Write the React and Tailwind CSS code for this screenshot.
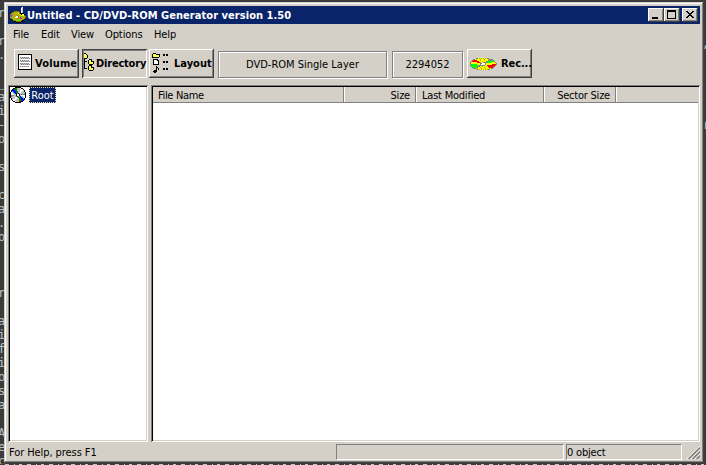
import React from "react";

const PALETTE = {
  k: "#000000", w: "#ffffff", g: "#808080", s: "#c0c0c0", y: "#ffff00",
  o: "#b8b000", r: "#ff0000", l: "#00ff00", G: "#008000", b: "#0000ff",
  c: "#00d0d0", m: "#ff00ff", p: "#800080", f: "#ffff90", d: "#808000",
};

// Bitmap icon: each character is one pixel, "." is transparent.
function Pixels({ rows, className = "" }) {
  const w = Math.max(...rows.map((r) => r.length));
  return (
    <svg width={w} height={rows.length} viewBox={`0 0 ${w} ${rows.length}`} shapeRendering="crispEdges" className={`block shrink-0 ${className}`}>
      {rows.flatMap((row, y) =>
        [...row].map((ch, x) =>
          PALETTE[ch] ? <rect key={`${x}-${y}`} x={x} y={y} width="1" height="1" fill={PALETTE[ch]} /> : null
        )
      )}
    </svg>
  );
}

const APP = [
  "...........gw...",
  "...........ws...",
  "...........ws...",
  "...........ws...",
  "....ddddd..ws...",
  "..ddoooood.ws...",
  ".dooooooydkkkk..",
  "doocooooooykywk.",
  "dmmoooodoooyyyd.",
  "dmoooowwdooloood",
  "oocoowwwdomloood",
  ".dooooodoommoook",
  ".kdoloooloooodk.",
  "..kddooollodkk..",
  "....kkdddddkk...",
  "......kkkkk.....",
];
const DISC = [
  ".....kkkkkk.....",
  "...kkGGssswkk...",
  "..kbGGGsssswwk..",
  ".kbbbGGssswwwsk.",
  ".kcbbbGGsswwssk.",
  "kwscbbGGswwssssk",
  "kwwscbbgkgssssgk",
  "kwwwsskwwksggggk",
  "kgggsskwwkswwwwk",
  "kgssssgkgcbsswwk",
  "ksssswwsGGbbcswk",
  ".kssswwssGGbbck.",
  ".kswwwsssGGbbbk.",
  "..kwwssssGGGbk..",
  "...kkwsssrpkk...",
  ".....kkkkkk.....",
];
const PAGE = [
  "kkkkkkkkkkkkkk",
  "kwwwwwwwwwwwwk",
  "kwwwwwwwwwwwwk",
  "kwgsgsgsgsgwwk",
  "kwsgsgsgsgsgwk",
  "kwwwwwwwwwwwwk",
  "kwgsgsgsgsgwwk",
  "kwsgsgsgsgsgwk",
  "kwwwwwwwwwwwwk",
  "kwgsgsgsgsgwwk",
  "kwsgsgsgsgsgwk",
  "kwwwwwwwwwwwwk",
  "kwgsgsgsgsgwwk",
  "kwwwwwwwwwwwwk",
  "kwwwwwwwwwwwwk",
  "kkkkkkkkkkkkkk",
];
const TREE = [
  "kk..........",
  "yfk.........",
  "fyfk........",
  "yfyk........",
  "fyfk........",
  "kkk.........",
  "k....kkk....",
  "k...kyfk....",
  "kkk.kfykkk..",
  "k...kyfyfk..",
  "k...kfyfyk..",
  "k....kkkk...",
  "k....kkk....",
  "k...kyfk....",
  "k...kfykkk..",
  "kkk.kyfyfk..",
  "....kfyfyk..",
  ".....kkkk...",
];
const LAYOUT = [
  ".kkk.............",
  "kyfykkkk...kk.kk.",
  "kfyfyfyk...kk.kk.",
  "kyfyfyfk.........",
  "kkkkkkk..........",
  ".................",
  ".kkkkk...........",
  ".kwwwkk..........",
  ".kwwwwk....kk.kk.",
  ".kwwwwk....kk.kk.",
  ".kwwwwk..........",
  ".kkkkkk..........",
  ".................",
  "....k............",
  "....kk...........",
  "....k.k....kk.kk.",
  "....k.k....kk.kk.",
  "..kkk............",
  ".kkkk............",
  "..kk.............",
];
const RECORD = [
  "......ggyoyoyoyoygg........",
  "...ggyoyyyoyyyoyyyogggg....",
  "..grrrryyyoyyyoyyygggglg...",
  ".grrrrrrryyyoyyyggllllllg..",
  "gyyyyyyrrrgyyggggllllyyyyg.",
  "gyyyyyyyyyggwwwgyyyyyyyyyyg",
  "gllllllyyygwwwwgyyyyyyrrrrg",
  "glllllllgggggggyyrrrrrrrrg.",
  ".gllllllggyyoyyyoyrrrrrrg..",
  "..glllggyyoyyyoyyyorrrrg...",
  "...gggyoyyyoyyyoyyyoygg....",
  "......ggyoyoyoyoyogg.......",
];
const MIN = ["......", "......", "......", "......", "......", "......", ".kkkkkk", ".kkkkkk"];
const MAX = ["kkkkkkkkk", "kkkkkkkkk", "k.......k", "k.......k", "k.......k", "k.......k", "k.......k", "k.......k", "kkkkkkkkk"];
const CLOSE = ["kk....kk", ".kk..kk.", "..kkkk..", "...kk...", "..kkkk..", ".kk..kk.", "kk....kk"];

const RAISED = "shadow-[inset_-1px_-1px_#404040,inset_1px_1px_#ffffff,inset_-2px_-2px_#808080]";
const PRESSED = "shadow-[inset_1px_1px_#404040,inset_-1px_-1px_#ffffff,inset_2px_2px_#808080]";
const WELL = "border border-t-[#808080] border-l-[#808080] border-r-white border-b-white";
const GROUP = "border border-[#808080] shadow-[inset_1px_1px_#fff,1px_1px_#fff]";
const PANE = "bg-white shadow-[inset_1px_1px_#808080,inset_-1px_-1px_#ffffff,inset_2px_2px_#000000,inset_-2px_-2px_#d4d0c8]";
const BOLD = "font-['DejaVu_Sans_Condensed','DejaVu_Sans',sans-serif] font-bold";

const LEFT = ["r", "", "r", ".", "", "_", "a", "i", "-", "o", "", "s", "", "c", "a", ".", "o", "", "", "", "r", "", "a", "i", "f", "i", "o", "s", "a", "", "A", "e", "c"];

function CaptionButton({ rows, className = "", icon = "" }) {
  return (
    <button className={`flex h-[14px] w-4 items-start bg-[#d4d0c8] ${RAISED} ${className}`}>
      <Pixels rows={rows} className={icon} />
    </button>
  );
}

export default function App() {
  return (
    <div className="relative h-[465px] w-[706px] overflow-hidden bg-[#3b3b3b] pt-[2px] pl-1 font-['DejaVu_Sans_Condensed','DejaVu_Sans',sans-serif] text-[11px] leading-[14px] text-black">
      <div className="absolute top-[6px] left-0 font-['DejaVu_Sans_Mono',monospace] text-[12px] text-[#b4c4c8]">
        {LEFT.map((t, i) => (
          <div key={i} className="-ml-[2px] h-[14px]">{t}</div>
        ))}
      </div>
      <div className="absolute top-[118px] left-[703px] font-['DejaVu_Sans_Mono',monospace] text-[12px] text-[#b4c4c8]">r</div>
      <div className="absolute top-[36px] left-[702px] font-['DejaVu_Sans_Mono',monospace] text-[12px] text-[#b4c4c8]">,</div>
      <div className="absolute bottom-0 left-0 h-px w-full bg-[repeating-linear-gradient(90deg,#3b3b3b_0_5px,#c0c8c8_5px_9px,#3b3b3b_9px_14px,#c0c8c8_14px_15px,#3b3b3b_15px_19px,#c0c8c8_19px_22px)]" />

      <div className="relative flex h-[461px] w-[700px] flex-col bg-[#d4d0c8] p-1 shadow-[inset_-1px_-1px_#404040,inset_1px_1px_#d4d0c8,inset_-2px_-2px_#808080,inset_2px_2px_#ffffff]">
        <div className="flex h-[18px] shrink-0 items-center bg-[#0a246a] pr-[2px] pl-[2px]">
          <Pixels rows={APP} />
          <span className={`${BOLD} ml-px flex-1 pt-px whitespace-nowrap tracking-[0.05px] text-white`}>Untitled - CD/DVD-ROM Generator version 1.50</span>
          <CaptionButton rows={MIN} icon="mt-[3px] ml-[3px]" />
          <CaptionButton rows={MAX} icon="mt-[2px] ml-[3px]" />
          <CaptionButton rows={CLOSE} className="ml-[2px]" icon="mt-[3px] ml-1" />
        </div>

        <div className="flex h-[21px] shrink-0 items-center pl-[5px] tracking-[-0.1px]">
          <span className="w-7">File</span>
          <span className="w-[30px]">Edit</span>
          <span className="w-[34px]">View</span>
          <span className="w-[49px]">Options</span>
          <span>Help</span>
        </div>

        <div className="flex h-10 shrink-0 items-start pt-1 pl-[6px]">
          <button className={`flex h-[29px] w-[65px] items-center overflow-hidden pl-1 ${RAISED}`}>
            <Pixels rows={PAGE} className="-mt-[3px]" />
            <span className={`${BOLD} ml-[3px] tracking-[0.15px]`}>Volume</span>
          </button>
          <button className={`ml-[3px] flex h-[29px] w-[65px] items-center overflow-hidden pl-[2px] ${PRESSED}`}>
            <Pixels rows={TREE} className="-mt-[3px]" />
            <span className={`${BOLD} tracking-[-0.2px]`}>Directory</span>
          </button>
          <button className={`ml-[2px] flex h-[29px] w-[65px] items-center overflow-hidden pl-[3px] ${RAISED}`}>
            <Pixels rows={LAYOUT} className="-mt-[2px]" />
            <span className={`${BOLD} ml-[5px]`}>Layout</span>
          </button>
          <div className={`mt-[2px] ml-1 flex h-[27px] w-[169px] items-center justify-center pt-px ${GROUP}`}>DVD-ROM Single Layer</div>
          <div className={`mt-[2px] ml-[5px] flex h-[27px] w-[71px] items-center justify-center pt-px ${GROUP}`}>2294052</div>
          <button className={`ml-1 flex h-[29px] w-[65px] items-center overflow-hidden pl-[3px] ${RAISED}`}>
            <Pixels rows={RECORD} />
            <span className={`${BOLD} ml-1 tracking-[-0.1px]`}>Rec...</span>
          </button>
        </div>

        <div className="flex h-[357px] shrink-0 gap-[3px]">
          <div className={`flex w-[140px] items-start p-[2px] ${PANE}`}>
            <Pixels rows={DISC} />
            <span className="ml-[3px] flex h-4 w-[27px] items-center justify-center border border-dotted border-[#f5db95] bg-[#0a246a] pt-px text-white">Root</span>
          </div>
          <div className={`flex-1 p-[2px] ${PANE}`}>
            <div className="flex h-4 border-b border-[#808080] bg-[#d4d0c8] leading-[18px] tracking-[-0.22px]">
              <span className="w-[191px] border-r border-[#808080] pl-[5px] tracking-[-0.35px]">File Name</span>
              <span className="w-[72px] border-r border-l border-r-[#808080] border-l-white pr-[5px] text-right">Size</span>
              <span className="w-32 border-r border-l border-r-[#808080] border-l-white pl-[5px]">Last Modified</span>
              <span className="w-[72px] border-r border-l border-r-[#808080] border-l-white pr-[5px] text-right">Sector Size</span>
              <span className="flex-1 border-l border-white" />
            </div>
          </div>
        </div>

        <div className="flex h-[18px] shrink-0 pt-[2px] pl-px">
          <span className="w-[327px] leading-[17px] tracking-[-0.08px]">For Help, press F1</span>
          <div className={`h-4 w-[228px] ${WELL}`} />
          <div className={`ml-[2px] h-4 w-[116px] leading-[15px] tracking-[-0.2px] ${WELL}`}>0 object</div>
          <svg width="13" height="13" viewBox="0 0 13 13" className="mt-[2px] ml-[5px]">
            <path d="M0 13L13 0M4 13L13 4M8 13L13 8" stroke="#fff" />
            <path d="M1.5 13L13 1.5M5.5 13L13 5.5M9.5 13L13 9.5" stroke="#808080" strokeWidth="1.6" />
          </svg>
        </div>
      </div>
    </div>
  );
}
